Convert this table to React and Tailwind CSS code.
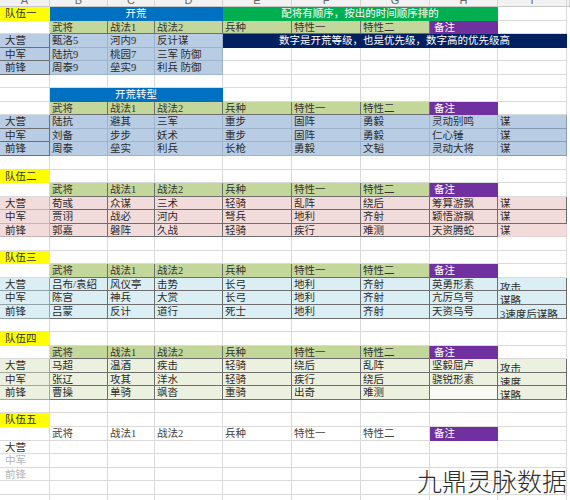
import React from 'react'

const LIGHT = 'border-[#dadada]'
const DARK = 'border-[#6e6e6e]'
const MID = 'border-[#9eb3cc]'

function C({ t = '', bg = '', b = LIGHT, span = '', tx = 'text-[#2b2b2b]', extra = '' }) {
  return (
    <div
      className={`${span} ${bg} ${b} ${tx} ${extra} border-r border-b px-[2px] whitespace-nowrap overflow-hidden leading-[13px]`}
    >
      {t}
    </div>
  )
}

// last sliver of column J at the right edge
function F() {
  return <div className="bg-white" />
}

function Empty({ n }) {
  return Array.from({ length: n }).map((_, i) => <C key={i} />)
}

function Team({ name }) {
  return (
    <>
      <C t={name} bg="bg-[#ffff00]" b="border-[#ffff00]" extra="pl-[5px]" />
      <Empty n={8} />
      <F />
    </>
  )
}

const HEAD = ['武将', '战法1', '战法2', '兵种', '特性一', '特性二']

function HeaderRow({ plain }) {
  return (
    <>
      <C />
      {HEAD.map((h) =>
        plain ? (
          <C key={h} t={h} tx="text-[#404040]" />
        ) : (
          <C key={h} t={h} bg="bg-[#c4d79b]" b={DARK} tx="text-[#333]" />
        )
      )}
      <C t="备注" bg="bg-[#7030a0]" b="border-[#7030a0]" tx="text-white" extra="pl-[4px]" />
      <C />
      <F />
    </>
  )
}

function DataRow({ label, vals, bg, b, lb = DARK, last = '', blankH, drop }) {
  return (
    <>
      <C t={label} bg={bg} b={lb} extra="pl-[5px]" />
      {vals.slice(0, 6).map((v, i) => (
        <C key={i} t={v} bg={bg} b={b} />
      ))}
      <C t={vals[6]} bg={blankH ? 'bg-[#fafaf4]' : bg} b={b} />
      <C t={vals[7]} bg={bg} b={last || b} extra={drop ? 'pt-[3px]' : ''} />
      <F />
    </>
  )
}

const trans = [
  ['大营', ['陆抗', '避其', '三军', '重步', '固阵', '勇毅', '灵动别鸣', '谋']],
  ['中军', ['刘备', '步步', '妖术', '重步', '固阵', '勇毅', '仁心锤', '谋']],
  ['前锋', ['周泰', '垒实', '利兵', '长枪', '勇毅', '文韬', '灵动大将', '谋']],
]
const team2 = [
  ['大营', ['荀彧', '众谋', '三术', '轻骑', '乱阵', '绕后', '筹算游飘', '谋']],
  ['中军', ['贾诩', '战必', '河内', '弩兵', '地利', '齐射', '颖悟游飘', '谋']],
  ['前锋', ['郭嘉', '磐阵', '久战', '轻骑', '疾行', '难测', '天资腾蛇', '谋']],
]
const team3 = [
  ['大营', ['吕布/袁绍', '风仪亭', '击势', '长弓', '地利', '齐射', '英勇形素', '攻击']],
  ['中军', ['陈宫', '神兵', '大赏', '长弓', '地利', '齐射', '亢厉乌号', '谋略']],
  ['前锋', ['吕蒙', '反计', '道行', '死士', '地利', '齐射', '天资乌号', '3速度后谋略']],
]
const team4 = [
  ['大营', ['马超', '温酒', '疾击', '轻骑', '绕后', '乱阵', '坚毅屈卢', '攻击']],
  ['中军', ['张辽', '攻其', '洋水', '轻骑', '疾行', '绕后', '骁锐形素', '速度']],
  ['前锋', ['曹操', '单骑', '飒沓', '重骑', '出奇', '难测', '', '谋略']],
]
const start = [
  ['大营', '甄洛5', '河内9', '反计谋'],
  ['中军', '陆抗9', '桃园7', '三军 防御'],
  ['前锋', '周泰9', '垒实9', '利兵 防御'],
]

const LETTERS = ['A', 'B', 'C', 'D', 'E', 'F', 'G', 'H', 'I', '']

export default function App() {
  const blue = 'bg-[#b8cce4]'
  return (
    <div className="relative w-[570px] h-[500px] overflow-hidden bg-white font-['Liberation_Serif','Noto_Sans_CJK_SC',serif] text-[10.5px]">
      {/* column letters, cut off at the top */}
      <div className="grid grid-cols-[50px_58px_47px_68px_69px_69px_69px_68px_69px_1fr] h-[7px] overflow-hidden bg-[#f2f2f2] border-b border-[#c8c8c8]">
        {LETTERS.map((l, i) => (
          <div key={i} className="border-r border-[#d4d4d4] text-center text-[11px] leading-[11px] -mt-[5px] text-[#666] font-['Liberation_Sans',sans-serif]">
            {l}
          </div>
        ))}
      </div>

      <div className="grid grid-cols-[50px_58px_47px_68px_69px_69px_69px_68px_69px_1fr] auto-rows-[13.56px]">
        {/* row 1 */}
        <C t="队伍一" bg="bg-[#ffff00]" b="border-[#ffff00]" extra="pl-[5px]" />
        <C t="开荒" span="col-span-3" bg="bg-[#0070c0]" b="border-[#0070c0]" tx="text-white" extra="text-center" />
        <C t="配将有顺序，按出的时间顺序排的" span="col-span-4" bg="bg-[#00b050]" b="border-[#00b050]" tx="text-white" extra="text-center" />
        <C />
        <F />

        {/* row 2 */}
        <HeaderRow />

        {/* rows 3-5 */}
        {start.map(([l, b, c, d], i) => (
          <React.Fragment key={l}>
            <C t={l} bg={blue} b={DARK} extra="pl-[5px]" />
            <C t={b} bg={blue} b={MID} />
            <C t={c} bg={blue} b={MID} />
            <C t={d} bg={blue} b={MID} />
            {i === 0 ? (
              <C
                t="数字是开荒等级，也是优先级，数字高的优先级高"
                span="col-span-5"
                bg="bg-[#002060]"
                b="border-[#002060]"
                tx="text-white"
                extra="text-center"
              />
            ) : (
              <Empty n={5} />
            )}
            <F />
          </React.Fragment>
        ))}

        {/* row 6 */}
        <Empty n={9} />
        <F />

        {/* row 7 */}
        <C />
        <C t="开荒转型" span="col-span-3" bg="bg-[#0070c0]" b="border-[#0070c0]" tx="text-white" extra="text-center" />
        <Empty n={5} />
        <F />

        <HeaderRow />
        {trans.map(([l, v]) => (
          <DataRow key={l} label={l} vals={v} bg={blue} b={MID} last="border-[#8a9bb0]" />
        ))}
        <Empty n={9} />
        <F />

        <Team name="队伍二" />
        <HeaderRow />
        {team2.map(([l, v], i) => (
          <DataRow key={l} label={l} vals={v} bg="bg-[#f2dcdb]" b={DARK} lb="border-[#c9b3b2]" last={i < 2 ? DARK : 'border-[#e6cfce]'} />
        ))}
        <Empty n={9} />
        <F />

        <Team name="队伍三" />
        <HeaderRow />
        {team3.map(([l, v]) => (
          <DataRow key={l} label={l} vals={v} bg="bg-[#daeef3]" b={DARK} lb="border-[#8fa3a8]" drop />
        ))}
        <Empty n={9} />
        <F />

        <Team name="队伍四" />
        <HeaderRow />
        {team4.map(([l, v], i) => (
          <DataRow key={l} label={l} vals={v} bg="bg-[#ebf1de]" b={DARK} lb="border-[#a3a89a]" blankH={i === 2} drop />
        ))}
        <Empty n={9} />
        <F />

        <Team name="队伍五" />
        <HeaderRow plain />
        <C t="大营" tx="text-[#333]" extra="pl-[5px]" />
        <Empty n={8} />
        <F />
        <C t="中军" tx="text-[#b5b5b5]" extra="pl-[5px]" />
        <Empty n={8} />
        <F />
        <C t="前锋" tx="text-[#b5b5b5]" extra="pl-[5px]" />
        <Empty n={8} />
        <F />
        <Empty n={9} />
        <F />
        <Empty n={9} />
        <F />
      </div>

      {/* watermark */}
      <div className="absolute right-[3px] bottom-[7px] text-[25px] leading-none font-light text-[#2e2e2e] font-['Noto_Sans_CJK_SC',sans-serif]">
        九鼎灵脉数据
      </div>
    </div>
  )
}
